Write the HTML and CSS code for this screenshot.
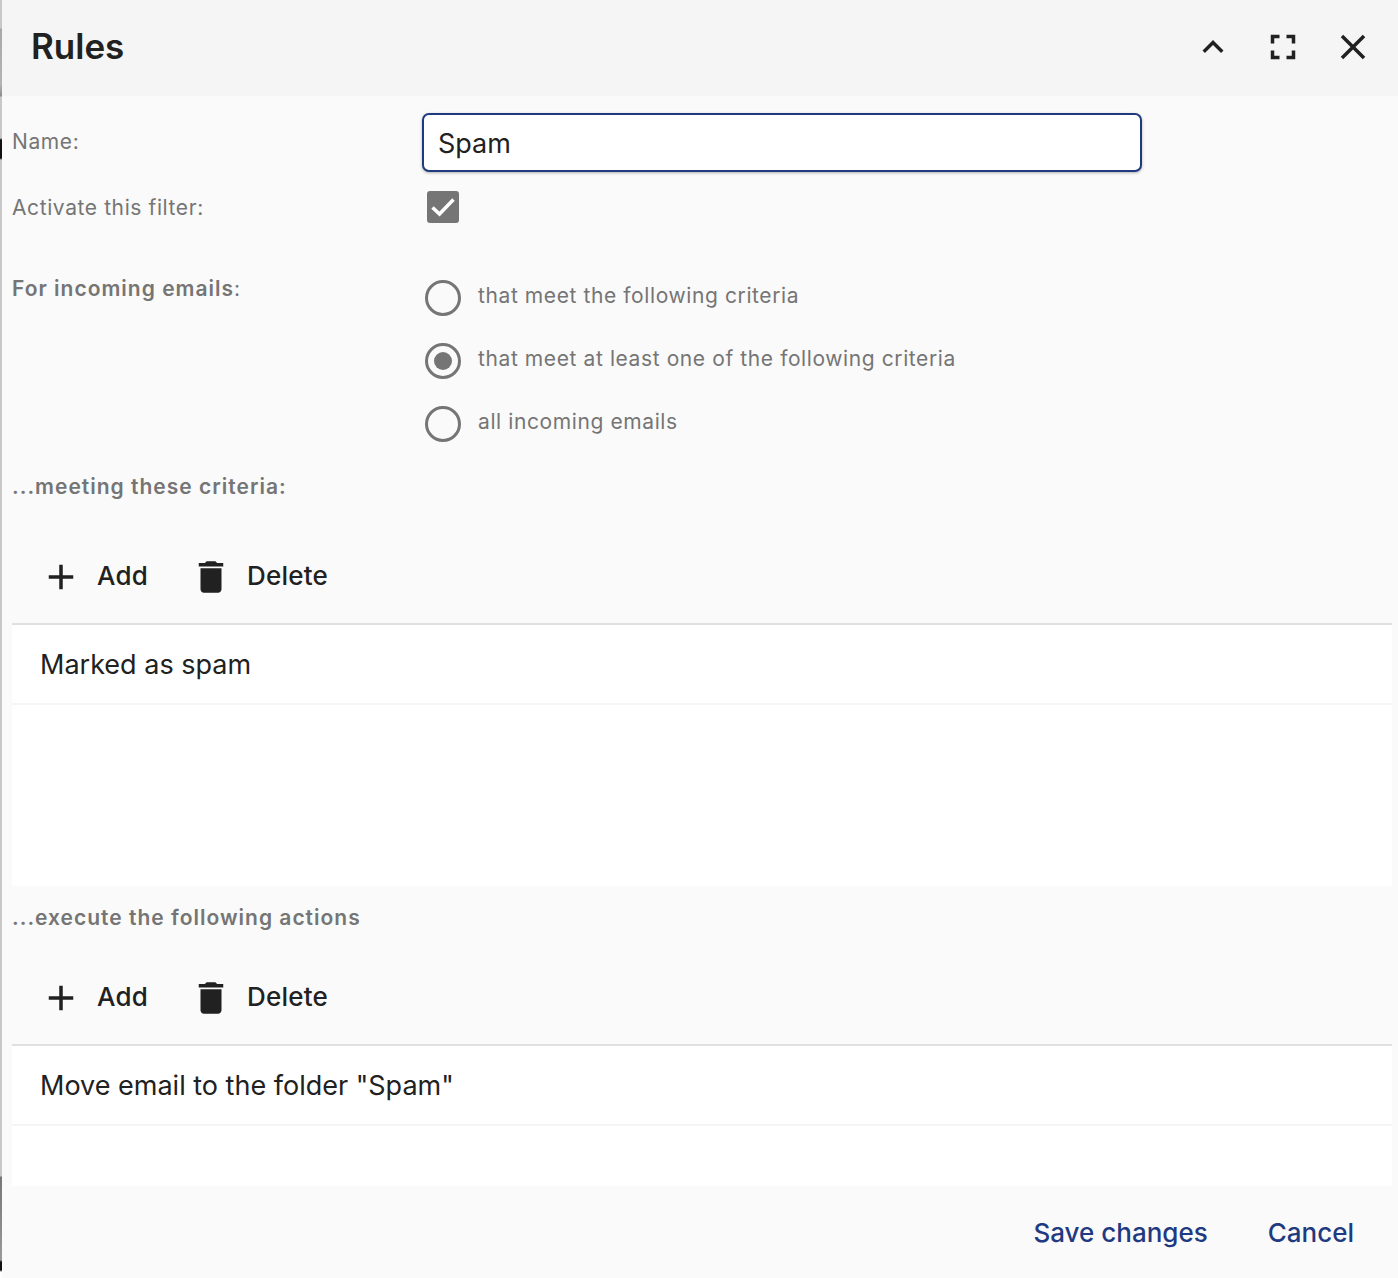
FILE: index.html
```html
<!DOCTYPE html>
<html lang="en">
<head>
    <meta charset="UTF-8">
    <meta name="viewport" content="width=device-width, initial-scale=1.0">
    <title>Rules</title>
    <link rel="stylesheet" href="styles.css">
</head>
<body>
    <div class="backdrop"></div>
    <div class="dialog">
        <div class="header">
            <h1>Rules</h1>
            <div class="header-icons">
                <svg class="icon" viewBox="0 0 24 24"><path d="M12 8l-6 6 1.41 1.41L12 10.83l4.59 4.58L18 14z"/></svg>
                <svg class="icon" viewBox="0 0 24 24"><path d="M7 14H5v5h5v-2H7v-3zM5 10h2V7h3V5H5v5zm12 7h-3v2h5v-5h-2v3zM14 5v2h3v3h2V5h-5z"/></svg>
                <svg class="icon" viewBox="0 0 24 24"><path d="M19 6.41L17.59 5 12 10.59 6.41 5 5 6.41 10.59 12 5 17.59 6.41 19 12 13.41 17.59 19 19 17.59 13.41 12z"/></svg>
            </div>
        </div>

        <div class="content">
            <div class="form-row name-row">
                <label class="form-label">Name:</label>
                <div class="name-input">Spam</div>
            </div>
            <div class="form-row active-row">
                <label class="form-label">Activate this filter:</label>
                <div class="checkbox">
                    <svg viewBox="0 0 32 32"><path d="M5.500 16.500l7 6.500 14-14.500" /></svg>
                </div>
            </div>
            <div class="form-row incoming-row">
                <label class="form-label"><b>For incoming emails</b>:</label>
                <div class="radio-list">
                    <div class="radio-item"><span class="radio"></span>that meet the following criteria</div>
                    <div class="radio-item"><span class="radio checked"></span>that meet at least one of the following criteria</div>
                    <div class="radio-item"><span class="radio"></span>all incoming emails</div>
                </div>
            </div>

            <div class="section-label criteria-label">...meeting these criteria:</div>
            <div class="toolbar">
                <div class="tool">
                    <svg class="icon" viewBox="0 0 24 24"><path d="M19 13h-6v6h-2v-6H5v-2h6V5h2v6h6v2z"/></svg>
                    Add
                </div>
                <div class="tool">
                    <svg class="icon" viewBox="0 0 24 24"><path d="M6 19c0 1.100.9 2 2 2h8c1.100 0 2-.9 2-2V7H6v12zM19 4h-3.500l-1-1h-5l-1 1H5v2h14V4z"/></svg>
                    Delete
                </div>
            </div>
            <div class="list criteria-list">
                <div class="list-item">Marked as spam</div>
            </div>

            <div class="section-label actions-label">...execute the following actions</div>
            <div class="toolbar">
                <div class="tool">
                    <svg class="icon" viewBox="0 0 24 24"><path d="M19 13h-6v6h-2v-6H5v-2h6V5h2v6h6v2z"/></svg>
                    Add
                </div>
                <div class="tool">
                    <svg class="icon" viewBox="0 0 24 24"><path d="M6 19c0 1.100.9 2 2 2h8c1.100 0 2-.9 2-2V7H6v12zM19 4h-3.500l-1-1h-5l-1 1H5v2h14V4z"/></svg>
                    Delete
                </div>
            </div>
            <div class="list actions-list">
                <div class="list-item">Move email to the folder "Spam"</div>
            </div>
        </div>

        <div class="footer">
            <span class="footer-btn">Save changes</span>
            <span class="footer-btn">Cancel</span>
        </div>
    </div>
</body>
</html>
```

FILE: styles.css
```css
* {
    margin: 0;
    padding: 0;
    box-sizing: border-box;
}

html, body {
    height: 1278px;
    overflow: hidden;
}

body {
    font-family: Inter, 'Liberation Sans', sans-serif;
    color: #212121;
    display: flex;
    background: #fff;
}

.backdrop {
    width: 2px;
    flex-shrink: 0;
    background: linear-gradient(180deg, #c8c8c8 0, #c8c8c8 28px, #a8a8a8 29px, #b4b4b4 84px, #8e8e8e 96px, #c8c8c8 97px, #c8c8c8 138px, #111 140px, #111 158px, #c8c8c8 160px, #c8c8c8 1176px, #777 1177px, #999 1260px, #111 1262px, #111 1270px, #fff 1272px);
}

.dialog {
    flex: 1;
    min-width: 0;
    background: #fafafa;
    display: flex;
    flex-direction: column;
}

.header {
    height: 96px;
    flex-shrink: 0;
    background: #f5f5f5;
    padding: 0 10px 0 29px;
    display: flex;
    align-items: center;
    justify-content: space-between;
}

.header h1 {
    font-size: 35px;
    font-weight: 600;
    margin-top: -4px;
}

.header-icons {
    display: flex;
    margin-top: -2px;
}

.header-icons .icon {
    width: 70px;
    height: 42px;
    padding: 0 14px;
}

.icon {
    fill: #212121;
    flex-shrink: 0;
}

.content {
    flex: 1;
    padding-left: 10px;
}

.form-row {
    display: grid;
    grid-template-columns: 410px 1fr;
}

.form-label {
    font-size: 21px;
    color: #757575;
    letter-spacing: 0.6px;
}

.form-label b {
    font-weight: 600;
    letter-spacing: 1px;
}

.name-row {
    padding-top: 17px;
    height: 76px;
}

.name-row .form-label {
    padding-top: 16px;
}

.name-input {
    width: 720px;
    height: 59px;
    border: 2px solid #1f3a80;
    border-radius: 7px;
    background: #fff;
    box-shadow: 0 1px 3px rgba(0, 0, 0, 0.3);
    font-size: 27px;
    line-height: 57px;
    padding-left: 14px;
}

.active-row {
    height: 100px;
    padding-top: 19px;
}

.active-row .form-label {
    padding-top: 4px;
}

.checkbox {
    width: 32px;
    height: 32px;
    margin-left: 5px;
    border-radius: 3px;
    background: #757575;
}

.checkbox svg {
    display: block;
    width: 32px;
    height: 32px;
    fill: none;
    stroke: #fff;
    stroke-width: 3.500;
}

.incoming-row {
    height: 202px;
}

.incoming-row .form-label {
    padding-top: 4px;
}

.radio-list {
    display: flex;
    flex-direction: column;
    gap: 27px;
    padding-left: 3px;
    padding-top: 8px;
}

.radio-item {
    display: flex;
    gap: 17px;
    height: 36px;
    font-size: 21px;
    line-height: 32px;
    letter-spacing: 0.6px;
    color: #757575;
}

.radio {
    width: 36px;
    height: 36px;
    border: 3.500px solid #757575;
    border-radius: 50%;
    flex-shrink: 0;
    display: flex;
    align-items: center;
    justify-content: center;
}

.radio.checked::after {
    content: '';
    width: 18px;
    height: 18px;
    border-radius: 50%;
    background: #757575;
}

.section-label {
    font-size: 21px;
    font-weight: 600;
    color: #757575;
    letter-spacing: 1px;
}

.toolbar {
    display: flex;
    align-items: center;
    gap: 42px;
    height: 95px;
    padding-left: 28px;
}

.tool {
    display: flex;
    align-items: center;
    gap: 15px;
    font-size: 26px;
    font-weight: 500;
    letter-spacing: 0.2px;
}

.tool .icon {
    width: 42px;
    height: 42px;
    margin-top: 3px;
}

.criteria-label {
    height: 54px;
}

.actions-label {
    height: 63px;
    padding-top: 19px;
}

.list {
    margin-right: 6px;
    background: #fff;
    border-top: 2px solid #e0e0e0;
}

.list-item {
    height: 80px;
    border-bottom: 2px solid #f5f5f5;
    padding-left: 28px;
    font-size: 27px;
    line-height: 80px;
}

.criteria-list {
    height: 263px;
}

.actions-list {
    height: 142px;
}

.footer {
    height: 92px;
    flex-shrink: 0;
    display: flex;
    justify-content: flex-end;
    align-items: center;
    gap: 60px;
    padding-right: 44px;
}

.footer-btn {
    font-size: 26px;
    font-weight: 500;
    color: #1f3a80;
}
```
